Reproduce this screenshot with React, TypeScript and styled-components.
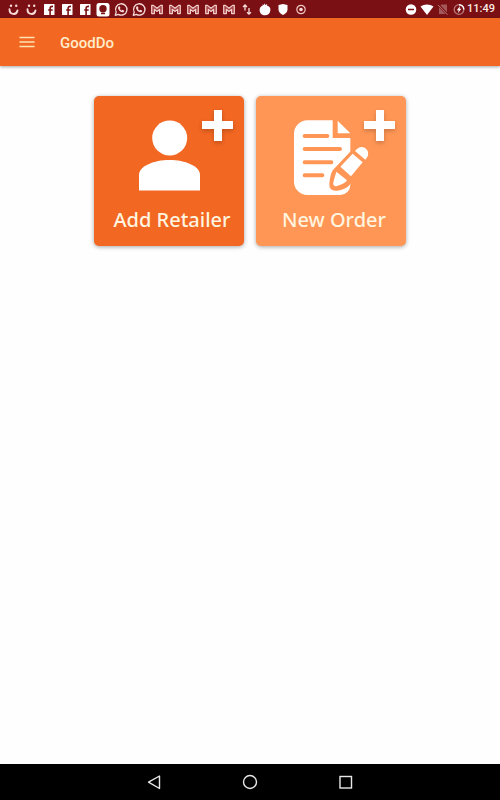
import React from "react";
import styled, { createGlobalStyle } from "styled-components";

const GlobalStyle = createGlobalStyle`
  *, *::before, *::after { box-sizing: border-box; }
  body { margin: 0; background: #fefefe; font-family: Roboto, sans-serif; }
`;

const Screen = styled.div`
  min-height: 100vh;
  display: flex;
  flex-direction: column;
`;

const StatusBar = styled.div`
  height: 18px;
  padding: 0 5px;
  display: flex;
  align-items: center;
  justify-content: space-between;
  background: #7a1014;
  color: #fff;
`;

const StatusGroup = styled.div<{ $gap: number }>`
  display: flex;
  align-items: center;
  gap: ${({ $gap }) => $gap}px;
`;

const StatusIcon = styled.svg`
  width: 16px;
  height: 16px;
  flex: none;
`;

const Clock = styled.time`
  font-size: 11px;
  line-height: 16px;
  font-weight: 500;
  color: #fbe9e4;
`;

const AppBar = styled.header`
  height: 48px;
  padding: 2px 16px 0;
  display: flex;
  align-items: center;
  gap: 22px;
  background: #f26822;
  box-shadow: 0 1px 3px rgba(0, 0, 0, 0.35);
`;

const MenuButton = styled.button`
  width: 22px;
  height: 24px;
  padding: 0;
  border: 0;
  background: none;
  cursor: pointer;
  svg { display: block; }
`;

const Title = styled.h1`
  margin: 0;
  font-size: 15px;
  line-height: 20px;
  font-weight: 500;
  color: #ffeccb;
`;

const Main = styled.main`
  flex: 1;
  padding: 30px 16px;
  display: flex;
  flex-wrap: wrap;
  align-items: flex-start;
  align-content: flex-start;
  justify-content: center;
  gap: 12px;
`;

const Card = styled.button<{ $tone: string }>`
  position: relative;
  width: 150px;
  height: 150px;
  padding: 0;
  border: 0;
  border-radius: 5px;
  display: flex;
  flex-direction: column;
  align-items: center;
  background: ${({ $tone }) => $tone};
  color: ${({ $tone }) => $tone};
  box-shadow: 0 1px 4px rgba(0, 0, 0, 0.35);
  cursor: pointer;
`;

const CardArt = styled.svg`
  display: block;
  width: 150px;
  height: 110px;
`;

const CardLabel = styled.span`
  padding-left: 6px;
  font-family: "Noto Sans", "Open Sans", sans-serif;
  font-size: 20px;
  line-height: 28px;
  font-weight: 500;
  white-space: nowrap;
  color: #fff4df;
`;

const PlusBadge = styled.svg`
  position: absolute;
  top: 14px;
  right: 11px;
  width: 31px;
  height: 31px;
  filter: drop-shadow(0 2px 2px rgba(0, 0, 0, 0.2));
`;

const NavBar = styled.nav`
  height: 36px;
  display: flex;
  align-items: center;
  justify-content: center;
  gap: 72px;
  background: #000;
`;

const NavButton = styled.button`
  width: 24px;
  height: 24px;
  padding: 0;
  border: 0;
  background: none;
  cursor: pointer;
  svg { display: block; }
`;

type Glyph =
  | "smile" | "facebook" | "portrait" | "whatsapp" | "gmail" | "transfer"
  | "tomato" | "shield" | "target" | "dnd" | "wifi" | "nosim" | "saver";

const glyphs: Record<Glyph, React.ReactNode> = {
  smile: (
    <g>
      <path d="M4.500 8.200C4.500 14 11.500 14.500 12.500 9.500" fill="none" stroke="#f7dcda" strokeWidth="1.900" strokeLinecap="round" />
      <circle cx="6" cy="4.700" r="1.200" fill="#f7dcda" />
      <circle cx="11.200" cy="4.700" r="1.200" fill="#f7dcda" />
    </g>
  ),
  facebook: (
    <g>
      <rect x="3" y="3" width="10.500" height="11" rx="0.600" fill="#fff" />
      <path d="M9.100 14V7.300Q9.100 5.200 12 5.400M7.200 9h4.500" fill="none" stroke="#7a1014" strokeWidth="1.600" />
    </g>
  ),
  portrait: (
    <g>
      <rect x="1.500" y="2" width="13" height="13.500" rx="2.500" fill="#fff" />
      <circle cx="8" cy="7.800" r="3.700" fill="#7a1014" />
      <path d="M6 12.500h4" stroke="#7a1014" strokeWidth="1.500" />
    </g>
  ),
  whatsapp: (
    <g>
      <path d="M2.300 14.300l.9-3.200A5.700 5.700 0 1 1 5.400 13.400Z" fill="none" stroke="#f7dcda" strokeWidth="1.300" strokeLinejoin="round" />
      <path d="M5.600 5.500l1-.3.9 1.700-.6.8c.4.900 1 1.500 1.900 1.900l.8-.8 1.600.9c0 1.300-1 1.800-2 1.600C7.100 10.800 5.200 8.800 5 7c0-.6.2-1.100.6-1.500Z" fill="#f7dcda" />
    </g>
  ),
  gmail: (
    <path
      d="M2.700 12.600V4.400h1.700L8 7.300l3.600-2.900h1.700v8.200h-2.700V8.400L8 10.500 5.400 8.400v4.200Z"
      fill="#a8484b"
      stroke="#f3cfcc"
      strokeWidth="1.200"
      strokeLinejoin="round"
    />
  ),
  transfer: (
    <g fill="none" stroke="#f7dcda" strokeWidth="1.300">
      <path d="M6 9.500V4M4 6l2-2 2 2" />
      <path d="M10 7v6M8 11.200l2 2 2-2" />
    </g>
  ),
  tomato: (
    <path fill="#fff" d="M7.500 2.300l.8 1.700 1.900-.9-.3 1.300C12.500 5 13.600 7 13.400 9.300 13 12.500 11 14.300 8 14.300S2.800 12.300 2.600 9.300C2.500 7 3.700 5 5.800 4.500l-.5-1 1.700.4Z" />
  ),
  shield: (
    <path fill="#fff" d="M8 3l4.500 1v4.500c0 2.600-2 4.500-4.500 5.500-2.500-1-4.500-2.900-4.500-5.500V4Z" />
  ),
  target: (
    <g>
      <circle cx="8" cy="8.500" r="4.200" fill="none" stroke="#efc5c2" strokeWidth="1.200" />
      <circle cx="8" cy="8.500" r="1.800" fill="#f7dcda" />
    </g>
  ),
  dnd: (
    <g>
      <circle cx="8" cy="8.500" r="5.300" fill="#fff" />
      <path d="M5 8.500h6" stroke="#7a1014" strokeWidth="1.500" />
    </g>
  ),
  wifi: <path fill="#fff" d="M8 14L1.500 5.600C5.200 2.800 10.800 2.800 14.500 5.600Z" />,
  nosim: (
    <g>
      <path d="M6.500 3.500H12V13H4V6Z" fill="#a4585a" />
      <path d="M3 3.500L13 14" stroke="#7a1014" strokeWidth="2.400" />
      <path d="M3 4L12.500 13.800" stroke="#b87678" strokeWidth="1" />
    </g>
  ),
  saver: (
    <g>
      <circle cx="8" cy="8.500" r="4.800" fill="none" stroke="#b87678" strokeWidth="1.300" />
      <path d="M8 3.700a4.800 4.800 0 0 1 4.800 4.800" fill="none" stroke="#fff" strokeWidth="1.400" />
      <path d="M9.300 4.800L5.800 9.300h1.900l-.8 3 3.400-4.500H8.500Z" fill="#fff" />
    </g>
  ),
};

const notifications: Glyph[] = [
  "smile", "smile", "facebook", "facebook", "facebook", "portrait",
  "whatsapp", "whatsapp", "gmail", "gmail", "gmail", "gmail", "gmail",
  "transfer", "tomato", "shield", "target",
];

const system: Glyph[] = ["dnd", "wifi", "nosim", "saver"];

const StatusGlyph = ({ name }: { name: Glyph }) => (
  <StatusIcon viewBox="0 0 16 16" aria-hidden="true">
    {glyphs[name]}
  </StatusIcon>
);

const Plus = () => (
  <PlusBadge viewBox="0 0 31 31" aria-hidden="true">
    <path d="M12 0h8v11h11v8H20v12h-8V19H0v-8h12Z" fill="#fff" />
  </PlusBadge>
);

const PersonArt = () => (
  <CardArt viewBox="0 0 150 110" aria-hidden="true">
    <g fill="#fff">
      <circle cx="75.700" cy="42" r="17.500" />
      <path d="M45 94.500V79C45 70 60 64 75.500 64S106 70 106 79v15.500Z" />
    </g>
  </CardArt>
);

const OrderArt = () => (
  <CardArt viewBox="18 24 450 330" aria-hidden="true">
    <path d="M172 97H248V150H301V291A30 30 0 0 1 271 321H172A40 40 0 0 1 132 281V137A40 40 0 0 1 172 97Z" fill="#fff" />
    <path d="M263 98L301 136H263Z" fill="#fff" />
    <path d="M164 144H232M164 183H270M164 223H244M164 262H217" fill="none" stroke="currentColor" strokeWidth="12" strokeLinecap="round" />
    <path
      d="M314 180L249 249Q243 258 240 286Q238 309 261 306Q284 302 293 294L352 222Z"
      fill="currentColor"
      stroke="currentColor"
      strokeWidth="4"
      strokeLinejoin="round"
    />
    <g fill="#fff">
      <path d="M259 251L291 277Q284 288 261 294Q248 297 250 283Z" />
      <path d="M308 197L338 223L303 265L271 236Z" />
      <path d="M315 189Q329 172 344 179Q357 187 354 202Q352 209 346 215Z" />
    </g>
  </CardArt>
);

export default function App() {
  return (
    <>
      <GlobalStyle />
      <Screen>
        <StatusBar>
          <StatusGroup $gap={2}>
            {notifications.map((name, i) => (
              <StatusGlyph key={i} name={name} />
            ))}
          </StatusGroup>
          <StatusGroup $gap={0}>
            {system.map((name) => (
              <StatusGlyph key={name} name={name} />
            ))}
            <Clock>11:49</Clock>
          </StatusGroup>
        </StatusBar>
        <AppBar>
          <MenuButton type="button" aria-label="Menu">
            <svg width="22" height="24" viewBox="0 0 22 24" aria-hidden="true">
              <path d="M3.500 6.500h15M3.500 11h15M3.500 15.500h15" stroke="#ffe3b5" strokeWidth="1.600" />
            </svg>
          </MenuButton>
          <Title>GoodDo</Title>
        </AppBar>
        <Main>
          <Card type="button" $tone="#f26722">
            <PersonArt />
            <CardLabel>Add Retailer</CardLabel>
            <Plus />
          </Card>
          <Card type="button" $tone="#ff9655">
            <OrderArt />
            <CardLabel>New Order</CardLabel>
            <Plus />
          </Card>
        </Main>
        <NavBar aria-label="System navigation">
          <NavButton type="button" aria-label="Back">
            <svg width="24" height="24" viewBox="0 0 24 24" aria-hidden="true">
              <path d="M17.500 6v12.500L6.500 12.200Z" fill="none" stroke="#e8e8e8" strokeWidth="1.400" strokeLinejoin="round" />
            </svg>
          </NavButton>
          <NavButton type="button" aria-label="Home">
            <svg width="24" height="24" viewBox="0 0 24 24" aria-hidden="true">
              <circle cx="12" cy="12" r="6.500" fill="none" stroke="#e8e8e8" strokeWidth="1.400" />
            </svg>
          </NavButton>
          <NavButton type="button" aria-label="Recent apps">
            <svg width="24" height="24" viewBox="0 0 24 24" aria-hidden="true">
              <rect x="6" y="6.500" width="11.500" height="11.500" fill="none" stroke="#e8e8e8" strokeWidth="1.400" />
            </svg>
          </NavButton>
        </NavBar>
      </Screen>
    </>
  );
}
